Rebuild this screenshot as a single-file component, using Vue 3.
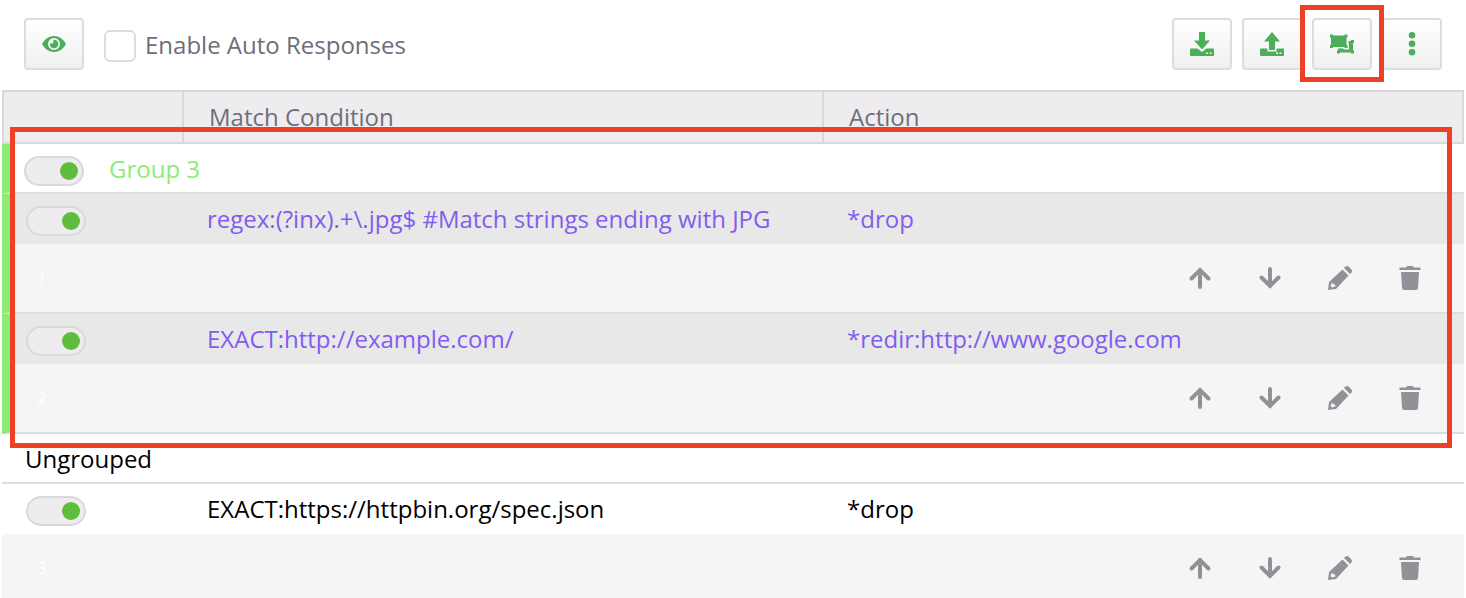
<script setup>
import { ref } from 'vue'

const enabled = ref(false)
const groupOn = ref(true)
const grouped = ref([
  { id: 1, on: true, match: 'regex:(?inx).+\\.jpg$ #Match strings ending with JPG', action: '*drop' },
  { id: 2, on: true, match: 'EXACT:http://example.com/', action: '*redir:http://www.google.com' },
])
const ungrouped = ref([
  { id: 3, on: true, match: 'EXACT:https://httpbin.org/spec.json', action: '*drop' },
])
const sections = [
  { key: 'g3', name: 'Group 3', grouped: true, rules: grouped },
  { key: 'none', name: 'Ungrouped', grouped: false, rules: ungrouped },
]
const rowActions = [
  { name: 'Move up', d: 'M12 21V4M3.500 12.500L12 4l8.500 8.500', line: true },
  { name: 'Move down', d: 'M12 3v17M3.500 11.500L12 20l8.500-8.500', line: true },
  { name: 'Edit', d: 'M0 24l1-8L14.500 3.500l6 6L8 23zM4 16.500L2.500 20l1.500 1.500 3.500-1-.5-2-2-.5zM16 2l1.500-1.500q1.500-1 3 0l3 3q1 1.500 0 3L22 8z' },
  { name: 'Delete', d: 'M1.500 1.500H8L9 0h6l1 1.500h6.500V4h-21zM3 6h18l-1 16q-.2 2-2 2H6q-1.800 0-2-2z' },
]
const tools = [
  { name: 'Import', d: 'M9 0h6v8.500h5L12 17.500 4 8.500h5zM1 16.500h6.500L12 20l4.500-3.500H23q1 0 1 1V23q0 1-1 1H1q-1 0-1-1v-5.500q0-1 1-1M16 20.500V22h2v-1.500zM19.500 20.500V22h2v-1.500z' },
  { name: 'Export', d: 'M12 0l8 9.500h-5V18H9V9.500H4zM1 16.500h6.500v3h9v-3H23q1 0 1 1V23q0 1-1 1H1q-1 0-1-1v-5.500q0-1 1-1M16 20.500V22h2v-1.500zM19.500 20.500V22h2v-1.500z' },
  { name: 'Group', marked: true, d: 'M0 2.500h3v1h11.500v-1h3v3h-1V13h1v3h-3v-1H3v1H0v-3h1V5.500H0zM18.500 9H21V8h3v3h-1v7.500h1v3h-3v-1H10v1H7v-3h1v-2h5.500v1H19v-6h-.5z' },
  { name: 'More', d: 'M12 0a3.300 3.300 0 1 1 0 6.600a3.300 3.300 0 0 1 0-6.600M12 8.500a3.300 3.300 0 1 1 0 6.600a3.300 3.300 0 0 1 0-6.600M12 17a3.300 3.300 0 1 1 0 6.600a3.300 3.300 0 0 1 0-6.600' },
]
</script>

<template>
  <main class="page">
    <header class="toolbar">
      <button class="tool" type="button" aria-label="Preview">
        <svg viewBox="0 0 24 24"><path fill-rule="evenodd" d="M0 12Q4.500 4 12 4t12 8q-4.500 8-12 8T0 12zM12 6a6 6 0 1 0 0 12a6 6 0 0 0 0-12zM12 7.700a4.300 4.300 0 1 1-4.200 3.500q2 1 3.200-.2t.2-3.200z" /></svg>
      </button>
      <label class="enable"><input v-model="enabled" type="checkbox" /><span>Enable Auto Responses</span></label>
      <div class="tools">
        <div v-for="t in tools" :key="t.name" class="slot">
          <button class="tool" type="button" :aria-label="t.name">
            <svg viewBox="0 0 24 24"><path fill-rule="evenodd" :d="t.d" /></svg>
          </button>
          <span v-if="t.marked" class="mark mark-tool"></span>
        </div>
      </div>
    </header>

    <div class="list">
      <table>
        <colgroup><col class="c-toggle" /><col /><col /><col class="c-end" /></colgroup>
        <thead>
          <tr><th></th><th>Match Condition</th><th>Action</th><th></th></tr>
        </thead>
        <tbody v-for="s in sections" :key="s.key" :class="{ grouped: s.grouped }">
          <tr class="group">
            <td colspan="4">
              <div class="group-head">
                <input v-if="s.grouped" v-model="groupOn" class="switch" type="checkbox" :aria-label="s.name" />
                <span>{{ s.name }}</span>
              </div>
            </td>
          </tr>
          <template v-for="r in s.rules.value" :key="r.id">
            <tr class="rule">
              <td><input v-model="r.on" class="switch" type="checkbox" :aria-label="'Rule ' + r.id" /></td>
              <td>{{ r.match }}</td>
              <td colspan="2">{{ r.action }}</td>
            </tr>
            <tr class="detail">
              <td colspan="4">
                <div class="detail-line">
                  <span class="num">{{ r.id }}</span>
                  <button v-for="a in rowActions" :key="a.name" type="button" class="act" :aria-label="a.name">
                    <svg viewBox="0 0 24 24"><path :class="{ line: a.line }" fill-rule="evenodd" :d="a.d" /></svg>
                  </button>
                </div>
              </td>
            </tr>
          </template>
        </tbody>
      </table>
      <span class="mark mark-group"></span>
    </div>
  </main>
</template>

<style>
body { background: #fff; overflow: hidden; }
</style>

<style scoped>
* { box-sizing: border-box; }
.page { font: 24px/32px "Open Sans", "Noto Sans", sans-serif; color: #000; }
.toolbar { display: flex; align-items: center; height: 90px; padding: 0 24px 2px; }
button { padding: 0; border: 0; background: none; display: flex; align-items: center; justify-content: center; }
svg { display: block; width: 24px; height: 24px; fill: currentColor; }
.tool { width: 60px; height: 52px; border: 2px solid #d9dee1; border-radius: 4px; background: linear-gradient(#fff, #f0f0f0); color: #4bae59; }
.enable { display: flex; align-items: center; gap: 9px; margin-left: 20px; padding-top: 4px; color: #6e6d7a; }
.enable span { padding-bottom: 2px; }
.enable input { appearance: none; width: 32px; height: 32px; margin: 0; border: 2px solid #d9dee1; border-radius: 6px; background: #fff; }
.tools { display: flex; gap: 10px; margin-left: auto; }
.slot { position: relative; }
.mark { position: absolute; z-index: 1; border: 5px solid #ee4025; pointer-events: none; }
.mark-tool { inset: -13px -12px -12px; }
.list { position: relative; padding: 0 2px; }
.mark-group { top: 37px; left: 10px; right: 14px; height: 321px; }
table { width: 100%; table-layout: fixed; border-collapse: separate; border-spacing: 0; }
.c-toggle { width: 180px; }
.c-end { width: 2px; }
th, td { padding: 0; text-align: left; font-weight: 400; }
th { height: 54px; border: solid #d9d8db; border-width: 2px 0 2px 2px; background: #eeecef; color: #6d707b; padding: 0 0 0 25px; }
th:first-child, th:last-child { padding: 0; }
.group td { height: 50px; border-bottom: 2px solid #d9dee1; font-weight: 500; }
.group-head { display: flex; align-items: center; gap: 25px; padding: 2px 0 0 23px; }
.grouped .group-head { padding-left: 14px; color: #8cec76; }
.grouped td:first-child { border-left: 8px solid #8cec76; }
.rule td { height: 50px; padding-left: 25px; }
.rule td:first-child { padding-left: 24px; }
.grouped .rule td:first-child { padding-left: 16px; }
.grouped .rule { background: #e8e8e8; color: #835cf0; }
.detail td { height: 70px; border-bottom: 2px solid #d9dce1; background: #f4f6f5; }
.detail-line { display: flex; align-items: center; gap: 46px; padding: 0 42px 0 35px; }
.grouped .detail-line { padding-left: 27px; }
.num { margin-right: auto; color: #fff; font-size: 16px; }
.act { color: #919197; }
.line { fill: none; stroke: currentColor; stroke-width: 4; stroke-linecap: round; }
.switch { appearance: none; display: block; width: 60px; height: 30px; margin: 4px 0 0; border: 2px solid #dad8dc; border-radius: 15px; background: #eeecef; }
.switch::before { content: ""; display: block; width: 18px; height: 18px; margin: 4px; border-radius: 9px; background: #bbb; }
.switch:checked::before { margin-left: 34px; background: #5fbd3b; }
</style>
